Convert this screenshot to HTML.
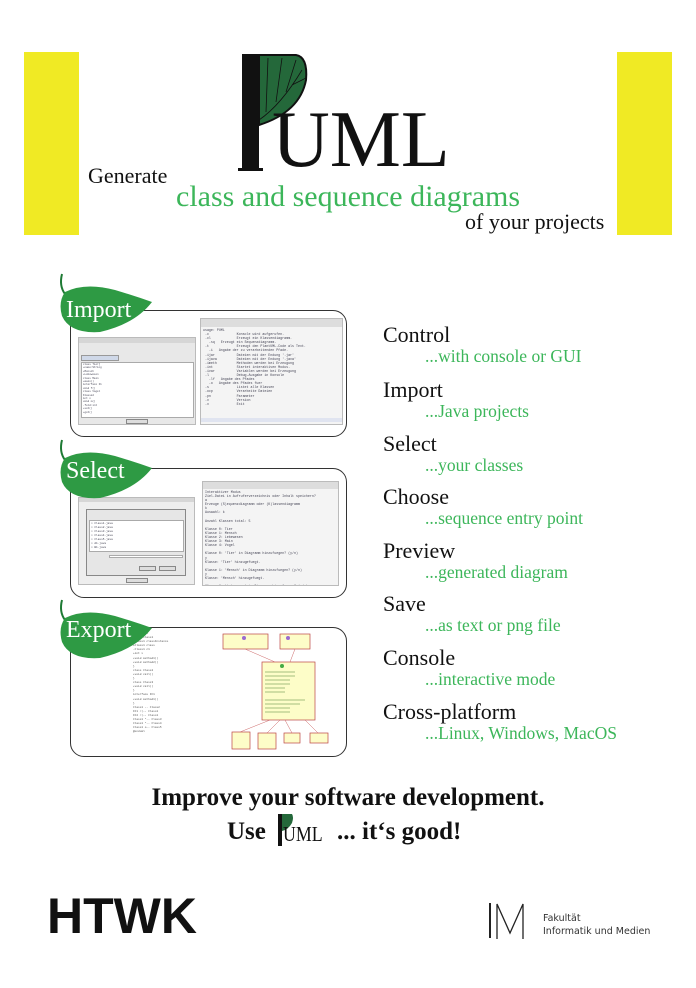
<!DOCTYPE html>
<html><head><meta charset="utf-8"><style>
*{margin:0;padding:0;box-sizing:border-box}
body{width:696px;height:988px;background:#fff;position:relative;overflow:hidden;font-family:"Liberation Serif",serif;color:#111}
.a{position:absolute;white-space:nowrap}
.y{background:#f0ea24;position:absolute}
.box{position:absolute;border:1.5px solid #333;border-radius:14px;background:#fff}
.t{position:absolute;font-size:22px;left:383px}
.s{position:absolute;font-size:17.5px;left:425px;color:#3cb65a}
.scr{position:absolute;background:#f2f2f2;border:1px solid #bbb;overflow:hidden}
.mono{font-family:"Liberation Mono",monospace;font-size:4px;line-height:5.6px;color:#445;position:absolute;white-space:pre}
</style></head><body>
<div class="y" style="left:24px;top:52px;width:55px;height:183px"></div>
<div class="y" style="left:617px;top:52px;width:55px;height:183px"></div>

<svg class="a" style="left:236px;top:50px" width="80" height="130" viewBox="0 0 80 130">
<rect x="6" y="4" width="17" height="117" fill="#111"/>
<rect x="2" y="118" width="25" height="3" fill="#111"/>
<path d="M23 5 L60 5 Q72 7 70 30 Q64 62 23 75 Z" fill="#24683a" stroke="#111" stroke-width="2"/>
<path d="M23 70 Q45 55 66 20 M30 62 L32 8 M40 52 L46 8 M50 42 L60 10 M56 35 L70 28" stroke="#111" stroke-width="0.8" fill="none"/>
</svg>
<div class="a" style="left:272px;top:100px;font-size:80px;line-height:80px">UML</div>
<div class="a" style="left:88px;top:163px;font-size:22px">Generate</div>
<div class="a" style="left:176px;top:180px;font-size:30px;color:#3cb65a">class and sequence diagrams</div>
<div class="a" style="left:465px;top:209px;font-size:22px">of your projects</div>

<!-- panels -->
<div class="box" style="left:70px;top:310px;width:277px;height:127px"></div>
<div class="box" style="left:70px;top:468px;width:277px;height:130px"></div>
<div class="box" style="left:70px;top:627px;width:277px;height:130px"></div>

<!-- Import screenshots -->
<div class="scr" style="left:78px;top:337px;width:118px;height:88px;background:#e8e8e8">
 <div style="position:absolute;left:0;top:0;width:100%;height:5px;background:#d6d6d6"></div>
 <div style="position:absolute;left:2px;top:24px;width:113px;height:56px;background:#fff;border:1px solid #aaa"></div>
 <div style="position:absolute;left:2px;top:17px;width:38px;height:6px;background:#cfd8e8;border:1px solid #999"></div>
 <div class="mono" style="left:4px;top:25px;font-size:2.6px;line-height:3.4px">class Tier{
+name:String
+Mensch
+Lebewesen
class Main
+main()
interface I1
void f()
class Vogel
Klasse2
int x
void m()
-feld:int
+set()
+get()</div>
 <div style="position:absolute;left:47px;top:81px;width:22px;height:5px;background:#ddd;border:1px solid #888"></div>
</div>
<div class="scr" style="left:200px;top:318px;width:143px;height:107px;background:#f4f4f4">
 <div style="position:absolute;left:0;top:0;width:100%;height:8px;background:#ddd"></div>
 <div class="mono" style="left:2px;top:9px;font-size:3.3px;line-height:4.1px">usage: PUML
 -c              Konsole wird aufgerufen.
 -cl             Erzeugt ein Klassendiagramm.
   -sq <Klasse, Methode>  Erzeugt ein Sequenzdiagramm.
 -t              Erzeugt den PlantUML-Code als Text.
   -i <filepath>  Angabe der zu verarbeitenden Pfade.
 -ijar           Dateien mit der Endung '.jar'
 -ijava          Dateien mit der Endung '.java'
 -imeth          Methoden werden bei Erzeugung
 -int            Startet interaktiven Modus.
 -ivar           Variablen werden bei Erzeugung
 -l              Debug-Ausgabe in Konsole
   -lf <log-filepath>  Angabe des Pfades
   -o <filepath>  Angabe des Pfades fuer
 -s              Listet alle Klassen
 -ocp            Verarbeite Dateien
 -pn             Parameter
 -v              Version
 -x              Exit</div>
 <div style="position:absolute;left:0;bottom:2px;width:100%;height:4px;background:#e0e4f0"></div>
</div>

<!-- Select screenshots -->
<div class="scr" style="left:78px;top:497px;width:117px;height:88px;background:#eee">
 <div style="position:absolute;left:0;top:0;width:100%;height:4px;background:#d6d6d6"></div>
 <div style="position:absolute;left:7px;top:11px;width:100px;height:67px;background:#e6e6e6;border:1px solid #888"></div>
 <div style="position:absolute;left:10px;top:22px;width:95px;height:32px;background:#fff;border:1px solid #aaa"></div>
 <div class="mono" style="left:12px;top:24px;font-size:2.8px;line-height:4px">☐ Class1.java
☐ Class2.java
☐ Class3.java
☐ Class4.java
☐ Class5.java
☐ A1.java
☐ B1.java</div>
 <div style="position:absolute;left:30px;top:57px;width:74px;height:3px;background:#fff;border:1px solid #aaa"></div>
 <div style="position:absolute;left:60px;top:68px;width:17px;height:5px;background:#ddd;border:1px solid #888"></div>
 <div style="position:absolute;left:80px;top:68px;width:17px;height:5px;background:#ddd;border:1px solid #888"></div>
 <div style="position:absolute;left:47px;top:80px;width:22px;height:5px;background:#ddd;border:1px solid #888"></div>
</div>
<div class="scr" style="left:202px;top:481px;width:137px;height:105px;background:#f4f4f4">
 <div style="position:absolute;left:0;top:0;width:100%;height:7px;background:#ddd"></div>
 <div class="mono" style="left:2px;top:8px;font-size:3.3px;line-height:4.1px">Interaktiver Modus
Ziel-Datei in Aufruferverzeichnis oder Inhalt speichern?
a
Erzeuge (S)equenzdiagramm oder (K)lassendiagramm
k
Auswahl: k

Anzahl Klassen total: 5

Klasse 0: Tier
Klasse 1: Mensch
Klasse 2: Lebewesen
Klasse 3: Main
Klasse 4: Vogel

Klasse 0: 'Tier' in Diagramm hinzufuegen? (y/n)
y
Klasse: 'Tier' hinzugefuegt.

Klasse 1: 'Mensch' in Diagramm hinzufuegen? (y/n)
y
Klasse: 'Mensch' hinzugefuegt.

Klasse 2: 'Lebewesen' in Diagramm hinzufuegen? (y/n)</div>
</div>

<!-- Export -->
<div class="mono" style="left:133px;top:632px;font-size:2.8px;line-height:4.1px;color:#555">@startuml
class Class1
-Class1 classInstance
+Class1 class
-Class1 c1
+int x
+void method1()
+void method2()
}
class Class2
+void call()
}
class Class3
+void call()
}
interface IF1
+void method1()
}
Class1 -- Class2
IF1 <|-- Class1
IF2 <|-- Class1
Class1 *-- Class3
Class1 *-- Class4
Class1 o-- Class5
@enduml</div>
<svg class="a" style="left:220px;top:630px" width="115" height="125" viewBox="0 0 115 125">
<g fill="#fdfdc8" stroke="#b44" stroke-width="0.7">
<rect x="3" y="4" width="45" height="15"/><rect x="60" y="4" width="30" height="15"/>
<rect x="42" y="32" width="53" height="58"/>
<rect x="12" y="102" width="18" height="17"/><rect x="38" y="103" width="18" height="16"/>
<rect x="64" y="103" width="16" height="10"/><rect x="90" y="103" width="18" height="10"/>
</g>
<g stroke="#c66" stroke-width="0.5" fill="none"><path d="M25 19 L55 32 M75 19 L70 32 M50 90 L20 102 M60 90 L47 103 M65 90 L72 103 M85 90 L98 103"/></g>
<g fill="#9a6bd0"><circle cx="24" cy="8" r="2"/><circle cx="68" cy="8" r="2"/></g>
<g fill="#4a4"><circle cx="62" cy="36" r="2"/></g>
<g stroke="#8a6" stroke-width="0.8"><path d="M45 42h30M45 46h30M45 50h25M45 54h25M45 58h20M45 62h20M45 70h40M45 74h35M45 78h25M45 82h25"/></g>
</svg>

<!-- leaves -->
<svg class="a" style="left:55px;top:272px" width="100" height="64" viewBox="0 0 100 64"><path d="M7 2 Q4 14 10 22" stroke="#1e7a34" stroke-width="2" fill="none"/><path d="M10 20 Q30 10 60 18 Q80 24 97 30 Q80 52 45 60 Q15 62 7 44 Q3 30 10 20Z" fill="#2e9a44"/></svg>
<div class="a" style="left:66px;top:297px;font-size:24px;color:#fff">Import</div>
<svg class="a" style="left:55px;top:438px" width="100" height="64" viewBox="0 0 100 64"><path d="M7 2 Q4 14 10 22" stroke="#1e7a34" stroke-width="2" fill="none"/><path d="M10 20 Q30 10 60 18 Q80 24 97 30 Q80 52 45 60 Q15 62 7 44 Q3 30 10 20Z" fill="#2e9a44"/></svg>
<div class="a" style="left:66px;top:458px;font-size:24px;color:#fff">Select</div>
<svg class="a" style="left:55px;top:598px" width="100" height="64" viewBox="0 0 100 64"><path d="M7 2 Q4 14 10 22" stroke="#1e7a34" stroke-width="2" fill="none"/><path d="M10 20 Q30 10 60 18 Q80 24 97 30 Q80 52 45 60 Q15 62 7 44 Q3 30 10 20Z" fill="#2e9a44"/></svg>
<div class="a" style="left:66px;top:617px;font-size:24px;color:#fff">Export</div>

<!-- right list -->
<div class="t" style="top:322px">Control</div><div class="s" style="top:346px">...with console or GUI</div>
<div class="t" style="top:377px">Import</div><div class="s" style="top:401px">...Java projects</div>
<div class="t" style="top:431px">Select</div><div class="s" style="top:455px">...your classes</div>
<div class="t" style="top:484px">Choose</div><div class="s" style="top:508px">...sequence entry point</div>
<div class="t" style="top:538px">Preview</div><div class="s" style="top:562px">...generated diagram</div>
<div class="t" style="top:591px">Save</div><div class="s" style="top:615px">...as text or png file</div>
<div class="t" style="top:645px">Console</div><div class="s" style="top:669px">...interactive mode</div>
<div class="t" style="top:699px">Cross-platform</div><div class="s" style="top:723px">...Linux, Windows, MacOS</div>

<!-- bottom -->
<div class="a" style="left:0;width:696px;text-align:center;top:784px;font-size:25px;font-weight:bold">Improve your software development.</div>
<div class="a" style="left:227px;top:818px;font-size:25px;font-weight:bold">Use</div>
<svg class="a" style="left:276px;top:812px" width="20" height="36" viewBox="0 0 20 36"><rect x="2" y="2" width="4" height="32" fill="#111"/><path d="M6 2 L16 2 Q18 5 16 11 Q12 18 6 19Z" fill="#24683a"/></svg>
<div class="a" style="left:283px;top:822px;font-size:21px;transform:scaleX(0.85);transform-origin:0 0">UML</div>
<div class="a" style="left:337px;top:818px;font-size:25px;font-weight:bold">... it‘s good!</div>

<div class="a" style="left:47px;top:891px;font-family:'Liberation Sans',sans-serif;font-weight:bold;font-size:50px;line-height:50px">HTWK</div>
<div class="a" style="left:489px;top:903px;width:1.5px;height:35px;background:#222"></div>
<svg class="a" style="left:496px;top:903px" width="30" height="36" viewBox="0 0 30 36"><path d="M1 36V1L14 30L27 1V36" stroke="#222" stroke-width="1.3" fill="none"/></svg>
<div class="a" style="left:543px;top:912px;font-family:'DejaVu Sans',sans-serif;font-size:9.5px;line-height:13px;color:#333">Fakultät<br>Informatik und Medien</div>
</body></html>
